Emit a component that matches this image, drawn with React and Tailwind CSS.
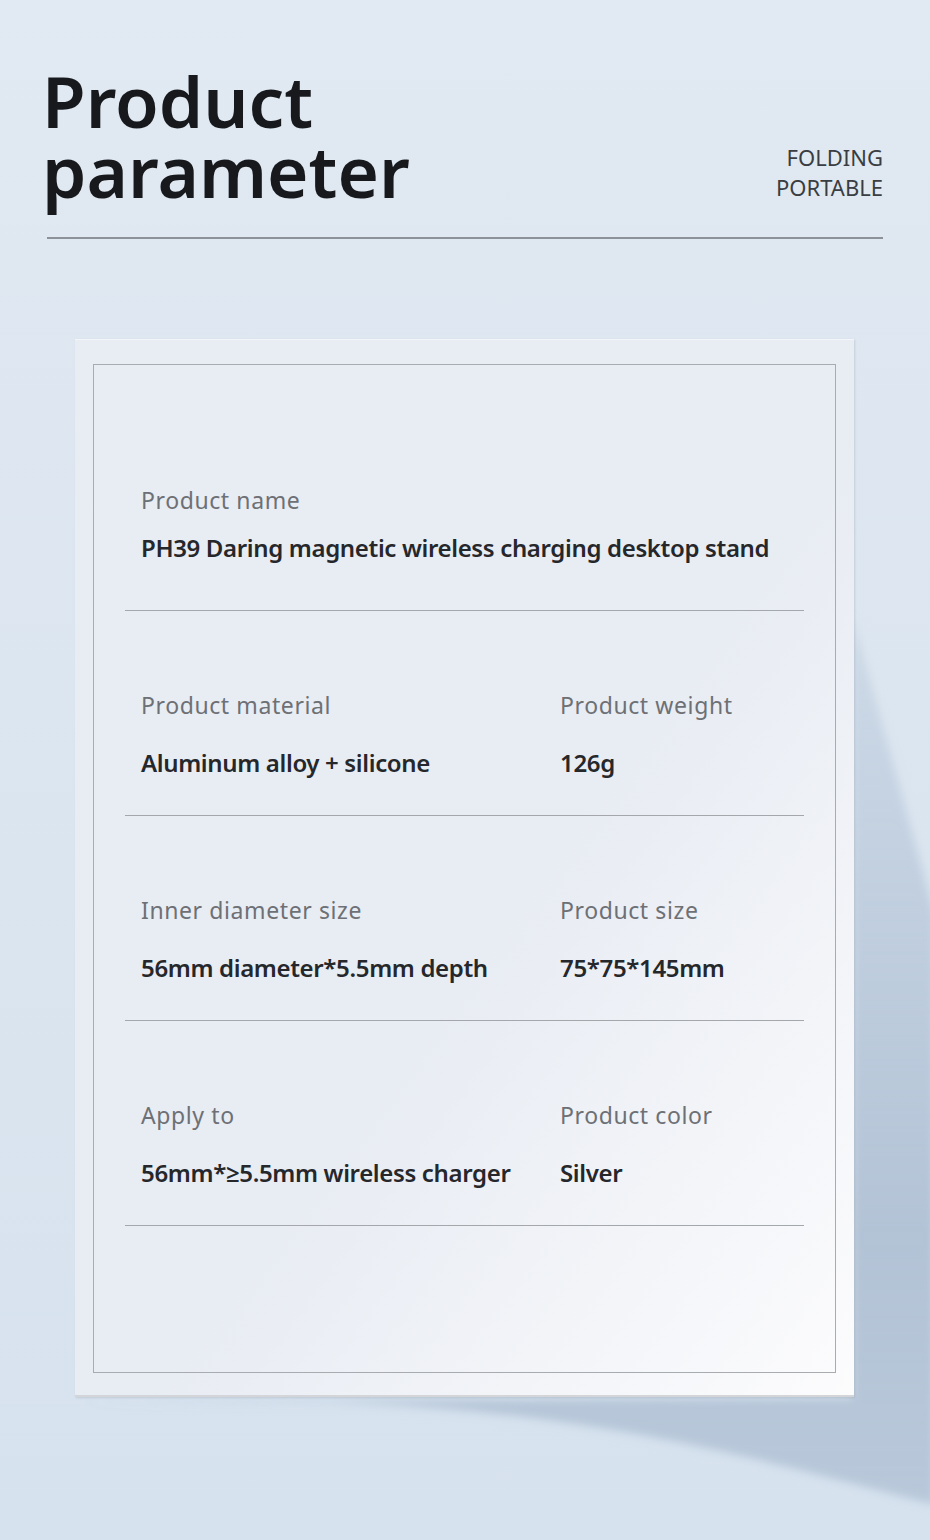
import React from 'react'

const font = { fontFamily: '"Noto Sans", "Open Sans", sans-serif' }

const rows = [
  {
    first: true,
    items: [{ label: 'Product name', value: 'PH39 Daring magnetic wireless charging desktop stand' }],
  },
  {
    items: [
      { label: 'Product material', value: 'Aluminum alloy + silicone' },
      { label: 'Product weight', value: '126g' },
    ],
  },
  {
    items: [
      { label: 'Inner diameter size', value: '56mm diameter*5.5mm depth' },
      { label: 'Product size', value: '75*75*145mm' },
    ],
  },
  {
    items: [
      { label: 'Apply to', value: '56mm*≥5.5mm wireless charger' },
      { label: 'Product color', value: 'Silver' },
    ],
  },
]

function Cell({ label, value, first }) {
  return (
    <div className="flex flex-col">
      <div className="text-[23px] leading-[30px] text-[#6d7075] tracking-[0.6px]">{label}</div>
      <div
        className={
          'text-[24px] leading-[30px] font-semibold text-[#25272b] tracking-[-0.35px] whitespace-nowrap ' +
          (first ? 'mt-[18px]' : 'mt-[28px]')
        }
      >
        {value}
      </div>
    </div>
  )
}

function ParamRow({ items, first }) {
  return (
    <div
      className={
        'border-b border-[#a4a7ac] ' + (first ? 'pt-[120px] pb-[47px]' : 'pt-[79px] pb-[37px]')
      }
    >
      <div className="grid grid-cols-[419px_1fr] pl-[16px]">
        {items.map((it) => (
          <Cell key={it.label} {...it} first={first} />
        ))}
      </div>
    </div>
  )
}

export default function App() {
  return (
    <div
      className="relative w-[930px] h-[1540px] overflow-hidden bg-gradient-to-b from-[#e1e9f2] to-[#d6e2ee]"
      style={font}
    >
      {/* cast shadow behind the card */}
      <svg className="absolute inset-0" width="930" height="1540" viewBox="0 0 930 1540">
        <defs>
          <filter id="blur" x="-20%" y="-20%" width="140%" height="140%">
            <feGaussianBlur stdDeviation="5" />
          </filter>
          <linearGradient id="shade" x1="0" y1="620" x2="0" y2="1500" gradientUnits="userSpaceOnUse">
            <stop offset="0" stopColor="#9fb2c9" stopOpacity="0.25" />
            <stop offset="0.7" stopColor="#9fb2c9" stopOpacity="0.65" />
            <stop offset="1" stopColor="#9fb2c9" stopOpacity="0.55" />
          </linearGradient>
        </defs>
        <path
          d="M852 615 L935 915 L935 1505 C 760 1460 600 1412 330 1402 L 80 1401 L 852 1398 Z"
          fill="url(#shade)"
          filter="url(#blur)"
        />
      </svg>

      <div className="relative">
        {/* header */}
        <div className="px-[47px] pt-[66px]">
          <div className="flex justify-between items-end">
            <h1 className="-ml-[5px] text-[71px] leading-[70px] font-semibold text-[#17191c]">
              Product
              <br />
              parameter
            </h1>
            <div className="mb-[4px] text-right text-[22px] leading-[30px] text-[#3a3d42]">
              FOLDING
              <br />
              PORTABLE
            </div>
          </div>
          <div className="mt-[31px] h-[2px] bg-[#8d9198]" />
        </div>

        {/* card */}
        <div className="ml-[75px] mt-[100px] w-[779px] h-[1058px] pt-[24px] px-[18px] pb-[22px] bg-gradient-to-br from-[#e8ecf3] from-55% to-[#fcfcfd] border-t border-t-[#f3f5f8] border-b-2 border-b-[#d3d5d9] shadow-[1px_1px_2px_rgba(120,130,145,0.25)]">
          <div className="h-full border border-[#a8abb0] px-[31px]">
            {rows.map((r, i) => (
              <ParamRow key={i} {...r} />
            ))}
          </div>
        </div>
      </div>
    </div>
  )
}
